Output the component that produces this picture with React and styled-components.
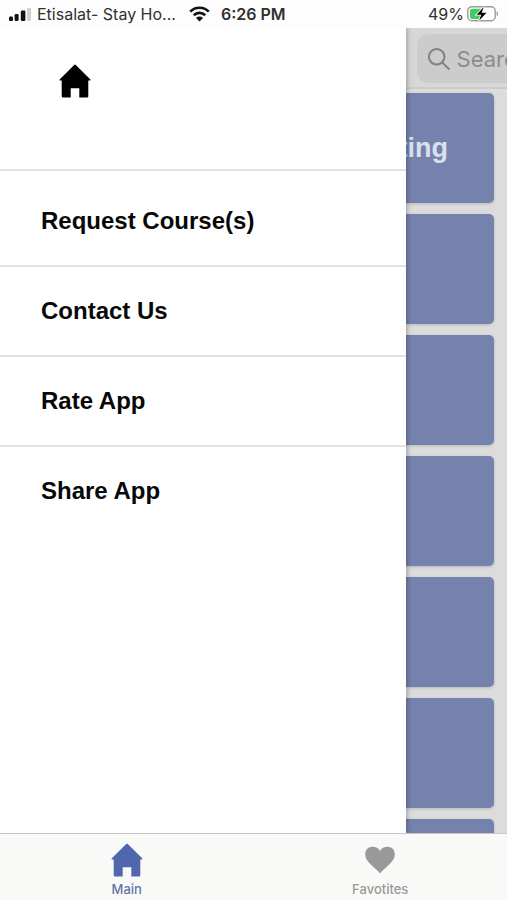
import React from "react";
import styled, { createGlobalStyle } from "styled-components";

const GlobalStyle = createGlobalStyle`
  * { box-sizing: border-box; }
  body { margin: 0; background: #fff; font-family: Inter, "Liberation Sans", sans-serif; }
  button, input { font: inherit; border: 0; background: none; padding: 0; margin: 0; }
  button { cursor: pointer; }
`;

const Screen = styled.div`
  display: flex;
  flex-direction: column;
  height: 100vh;
  overflow: hidden;
`;

const StatusBar = styled.header`
  display: flex;
  align-items: center;
  flex: none;
  height: 28px;
  padding: 0 8px;
  background: #fdfdfd;
  color: #303030;
  font-size: 16px;
  line-height: 28px;
  white-space: nowrap;
`;

const Carrier = styled.span`
  margin: 0 13px 0 5px;
`;

const Clock = styled.time`
  margin-left: 11px;
  font-weight: 600;
`;

const Battery = styled.div`
  display: flex;
  align-items: center;
  gap: 3px;
  margin-left: auto;
`;

const Body = styled.div`
  display: flex;
  flex: 1;
  min-height: 0;
`;

const Drawer = styled.nav`
  flex: none;
  width: 80%;
  background: #fff;
  z-index: 1;
  box-shadow: 1px 0 5px rgba(0, 0, 0, 0.3);
  clip-path: inset(0 -8px 0 0);
`;

const DrawerHeader = styled.div`
  height: 143px;
  padding: 36px 59px;
  border-bottom: 2px solid #e2e2e2;
`;

const HomeButton = styled.button`
  display: block;
  color: #000;
  svg { display: block; }
`;

const Menu = styled.ul`
  list-style: none;
  margin: 0;
  padding: 6px 0 0;
`;

const MenuItem = styled.li`
  & + & { border-top: 2px solid #e2e2e2; }
`;

const MenuLink = styled.a`
  display: block;
  padding: 0 41px;
  color: #080808;
  font: bold 24px/88px "Liberation Sans", Arial, sans-serif;
  text-decoration: none;
`;

const Main = styled.main`
  flex: 1;
  min-width: 0;
  overflow: hidden;
  background: #dcdcdd;
`;

const SearchBar = styled.div`
  height: 61px;
  padding: 6px 11px;
  background: #d7d7d7;
  border-bottom: 2px solid #cbcbcb;
`;

const SearchField = styled.label`
  display: flex;
  align-items: center;
  gap: 6px;
  width: 240px;
  height: 49px;
  padding: 0 10px;
  border-radius: 12px;
  background: #cccccc;
  color: #818181;
  svg { flex: none; }
`;

const SearchInput = styled.input`
  min-width: 0;
  flex: 1;
  font-size: 22px;
  outline: 0;
  &::placeholder { color: #8c8c8c; opacity: 1; }
`;

const Cards = styled.div`
  display: flex;
  flex-direction: column;
  gap: 11px;
  padding: 4px 13px 0 0;
`;

const Card = styled.button`
  display: flex;
  align-items: center;
  justify-content: flex-end;
  flex: none;
  height: 110px;
  padding-right: 46px;
  border-radius: 0 5px 5px 0;
  background: #7582ad;
  box-shadow: 0 1px 3px rgba(0, 0, 0, 0.16);
  color: #d9e0ee;
  font: bold 27px/32px "Liberation Sans", Arial, sans-serif;
`;

const TabBar = styled.nav`
  display: flex;
  flex: none;
  height: 67px;
  border-top: 1px solid #c6c6c6;
  background: #f9faf8;
`;

const Tab = styled.button`
  display: flex;
  flex: 1;
  flex-direction: column;
  align-items: center;
  gap: 4px;
  padding-top: 9px;
  color: ${({ $active }) => ($active ? "#5067ad" : "#999999")};
  font-size: 13px;
  font-weight: 500;
  line-height: 16px;
`;

const TabIcon = styled.span`
  display: flex;
  align-items: center;
  justify-content: center;
  height: 34px;
`;

const TabLabel = styled.span`
  color: ${({ $active }) => ($active ? "#6573a8" : "#999999")};
`;

const HomeIcon = () => (
  <svg width="32" height="34" viewBox="0 0 32 34" fill="currentColor" aria-hidden="true">
    <path d="M15.2 .9a1.2 1.2 0 0 1 1.6 0L31.2 15.2c.4.5.3 1.3-.4 1.3h-1.5v15.8a1.2 1.2 0 0 1-1.2 1.2h-7.8V24.2h-8.6v9.3H3.9a1.2 1.2 0 0 1-1.2-1.2V16.5H1.2c-.7 0-.8-.8-.4-1.3z" />
  </svg>
);

const HeartIcon = () => (
  <svg width="32" height="30" viewBox="0 0 32 30" fill="currentColor" aria-hidden="true">
    <path d="M16 28.5C14 25.6 9.8 22.5 6.5 19.3C3.2 16.1 1.2 13 1.2 9.3C1.2 4.8 4.3 1.8 8.4 1.8C11.8 1.8 14.7 3.2 16 6C17.3 3.2 20.2 1.8 23.6 1.8C27.7 1.8 30.8 4.8 30.8 9.3C30.8 13 28.8 16.1 25.5 19.3C22.2 22.5 18 25.6 16 28.5Z" />
  </svg>
);

const SignalIcon = () => (
  <svg width="24" height="15" viewBox="0 0 24 15" aria-label="Signal strength">
    <rect x="1" y="9.5" width="4" height="4.5" rx="1.3" fill="#111" />
    <rect x="6.6" y="7" width="4" height="7" rx="1.3" fill="#111" />
    <rect x="12.8" y="3.5" width="4.6" height="10.5" rx="1.3" fill="#111" />
    <rect x="19" y="1" width="4" height="13" rx="1.3" fill="#d0d0d0" />
  </svg>
);

const WifiIcon = () => (
  <svg width="21" height="16" viewBox="0 0 21 16" fill="none" stroke="#111" strokeWidth="2.7" aria-label="Wi-Fi">
    <path d="M1.2 5.6a13.2 13.2 0 0 1 18.6 0" />
    <path d="M4.8 9.3a8.1 8.1 0 0 1 11.4 0" />
    <path d="M10.5 15.5 7 12a5 5 0 0 1 7 0z" fill="#111" stroke="none" />
  </svg>
);

const BatteryIcon = () => (
  <svg width="32" height="18" viewBox="0 0 32 18" aria-label="Charging">
    <rect x=".8" y="1.8" width="27.4" height="14" rx="4" fill="#fff" stroke="#9b9b9b" strokeWidth="1.4" />
    <path d="M5 3.7h10.5l-3 10.3H5A2 2 0 0 1 3 12V5.7a2 2 0 0 1 2-2z" fill="#42cd62" />
    <path d="M29.7 6.3c1.8.5 1.8 4.5 0 5z" fill="#9b9b9b" />
    <path d="M16.8 2 9.6 9.7h4.6L12 15.8l7.5-8.1h-4.9z" fill="#000" stroke="#fff" strokeWidth="1.6" paintOrder="stroke" />
  </svg>
);

const SearchIcon = () => (
  <svg width="24" height="24" viewBox="0 0 24 24" fill="none" stroke="currentColor" strokeWidth="2" strokeLinecap="round" aria-hidden="true">
    <circle cx="9.7" cy="9.8" r="7.8" />
    <path d="m15.5 15.7 6.4 6.3" />
  </svg>
);

const menu = ["Request Course(s)", "Contact Us", "Rate App", "Share App"];
const cards = ["ting", "", "", "", "", "", ""];

export default function App() {
  return (
    <>
      <GlobalStyle />
      <Screen>
        <StatusBar>
          <SignalIcon />
          <Carrier>Etisalat- Stay Ho...</Carrier>
          <WifiIcon />
          <Clock>6:26 PM</Clock>
          <Battery>
            <span>49%</span>
            <BatteryIcon />
          </Battery>
        </StatusBar>
        <Body>
          <Drawer aria-label="Menu">
            <DrawerHeader>
              <HomeButton aria-label="Home"><HomeIcon /></HomeButton>
            </DrawerHeader>
            <Menu>
              {menu.map((label) => (
                <MenuItem key={label}><MenuLink href="#">{label}</MenuLink></MenuItem>
              ))}
            </Menu>
          </Drawer>
          <Main>
            <SearchBar>
              <SearchField>
                <SearchIcon />
                <SearchInput type="text" placeholder="Search" aria-label="Search" />
              </SearchField>
            </SearchBar>
            <Cards>
              {cards.map((title, i) => (
                <Card key={i} aria-label={title ? undefined : `Category ${i + 1}`}>{title}</Card>
              ))}
            </Cards>
          </Main>
        </Body>
        <TabBar aria-label="Tabs">
          <Tab $active aria-current="page">
            <TabIcon><HomeIcon /></TabIcon>
            <TabLabel $active>Main</TabLabel>
          </Tab>
          <Tab>
            <TabIcon><HeartIcon /></TabIcon>
            <TabLabel>Favotites</TabLabel>
          </Tab>
        </TabBar>
      </Screen>
    </>
  );
}
